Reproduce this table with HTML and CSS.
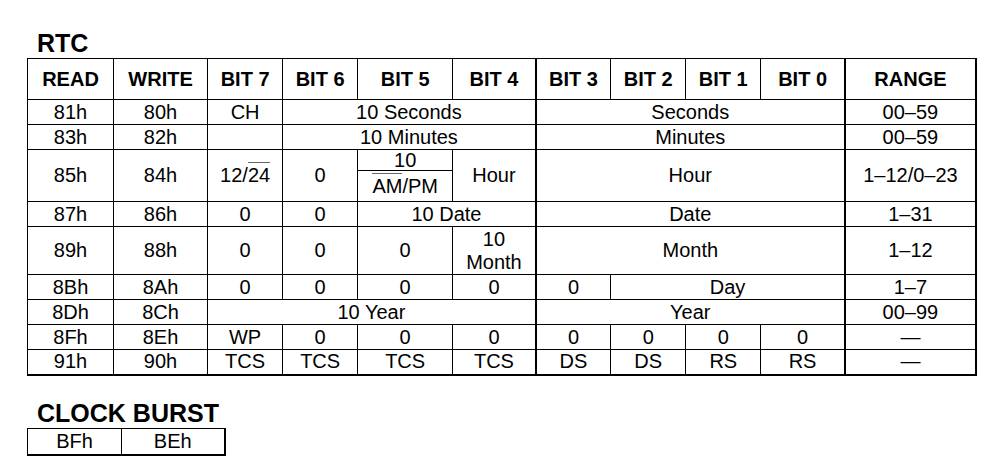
FILE: index.html
```html
<!DOCTYPE html>
<html lang="en">
<head>
<meta charset="utf-8">
<title>RTC Register Map</title>
<link rel="stylesheet" href="styles.css">
</head>
<body>
<div class="page">
  <h2 class="title">RTC</h2>
  <table class="regs">
    <colgroup>
      <col class="c-read"><col class="c-write"><col class="c-bit"><col class="c-bit"><col class="c-bit5"><col class="c-bit4"><col class="c-bit"><col class="c-bit"><col class="c-bit"><col class="c-bit0"><col class="c-range">
    </colgroup>
    <tr class="hd">
      <th>READ</th><th>WRITE</th><th>BIT 7</th><th>BIT 6</th><th>BIT 5</th><th>BIT 4</th><th class="tl">BIT 3</th><th>BIT 2</th><th>BIT 1</th><th>BIT 0</th><th class="rg">RANGE</th>
    </tr>
    <tr class="r">
      <td>81h</td><td>80h</td><td>CH</td><td colspan="3">10 Seconds</td><td colspan="4" class="tl">Seconds</td><td class="rg">00–59</td>
    </tr>
    <tr class="r">
      <td>83h</td><td>82h</td><td></td><td colspan="3">10 Minutes</td><td colspan="4" class="tl">Minutes</td><td class="rg">00–59</td>
    </tr>
    <tr class="ha">
      <td rowspan="2">85h</td><td rowspan="2">84h</td><td rowspan="2">12/<span class="bar">24</span></td><td rowspan="2">0</td><td class="split">10</td><td rowspan="2">Hour</td><td rowspan="2" colspan="4" class="tl">Hour</td><td rowspan="2" class="rg">1–12/0–23</td>
    </tr>
    <tr class="hb">
      <td><span class="bar">AM</span>/PM</td>
    </tr>
    <tr class="r">
      <td>87h</td><td>86h</td><td>0</td><td>0</td><td colspan="2">10 Date</td><td colspan="4" class="tl">Date</td><td class="rg">1–31</td>
    </tr>
    <tr class="r2">
      <td>89h</td><td>88h</td><td>0</td><td>0</td><td>0</td><td>10<br>Month</td><td colspan="4" class="tl">Month</td><td class="rg">1–12</td>
    </tr>
    <tr class="r">
      <td>8Bh</td><td>8Ah</td><td>0</td><td>0</td><td>0</td><td>0</td><td class="tl">0</td><td colspan="3">Day</td><td class="rg">1–7</td>
    </tr>
    <tr class="r">
      <td>8Dh</td><td>8Ch</td><td colspan="4">10 Year</td><td colspan="4" class="tl">Year</td><td class="rg">00–99</td>
    </tr>
    <tr class="r">
      <td>8Fh</td><td>8Eh</td><td>WP</td><td>0</td><td>0</td><td>0</td><td class="tl">0</td><td>0</td><td>0</td><td>0</td><td class="rg">—</td>
    </tr>
    <tr class="r last">
      <td>91h</td><td>90h</td><td>TCS</td><td>TCS</td><td>TCS</td><td>TCS</td><td class="tl">DS</td><td>DS</td><td>RS</td><td>RS</td><td class="rg">—</td>
    </tr>
  </table>

  <h2 class="title title2">CLOCK BURST</h2>
  <table class="burst">
    <colgroup><col class="b1"><col class="b2"></colgroup>
    <tr><td>BFh</td><td class="br">BEh</td></tr>
  </table>
</div>
</body>
</html>
```

FILE: styles.css
```css
body {
  margin: 0;
  background: #ffffff;
  color: #000000;
  font-family: "Liberation Sans", Arial, sans-serif;
}

.page {
  padding: 29px 0 0 27px;
}

.title {
  margin: 0 0 0 10px;
  font-size: 25px;
  font-weight: bold;
  line-height: 29px;
}

.title2 {
  margin-top: 23px;
}

.regs {
  border-collapse: collapse;
  table-layout: fixed;
  width: 950px;
  font-size: 20px;
  line-height: 23px;
}

.c-read { width: 86px; }
.c-write { width: 94px; }
.c-bit { width: 75px; }
.c-bit5 { width: 95px; }
.c-bit4 { width: 83px; }
.c-bit0 { width: 84px; }
.c-range { width: 131px; }

.regs th,
.regs td {
  border: 1px solid #000;
  padding: 0;
  text-align: center;
  vertical-align: middle;
}

.regs th {
  font-weight: bold;
}

.regs .tl {
  border-left: 2px solid #000;
}

.regs .rg {
  border-left: 2px solid #000;
  border-right: 2px solid #000;
}

.regs .last td {
  border-bottom: 2px solid #000;
}

.hd { height: 41px; }
.r { height: 25px; }
.r2 { height: 48px; }
.ha { height: 20px; }
.hb { height: 31px; }

.regs .split {
  line-height: 20px;
}

.bar {
  border-top: 1px solid #666;
  padding-top: 1px;
}

.burst {
  border-collapse: collapse;
  table-layout: fixed;
  width: 198px;
  font-size: 20px;
  line-height: 23px;
}

.b1 { width: 94px; }
.b2 { width: 103px; }

.burst td {
  height: 25px;
  border: 1px solid #000;
  border-bottom: 2px solid #000;
  padding: 0;
  text-align: center;
  vertical-align: middle;
}

.burst .br {
  border-right: 2px solid #000;
}
```
